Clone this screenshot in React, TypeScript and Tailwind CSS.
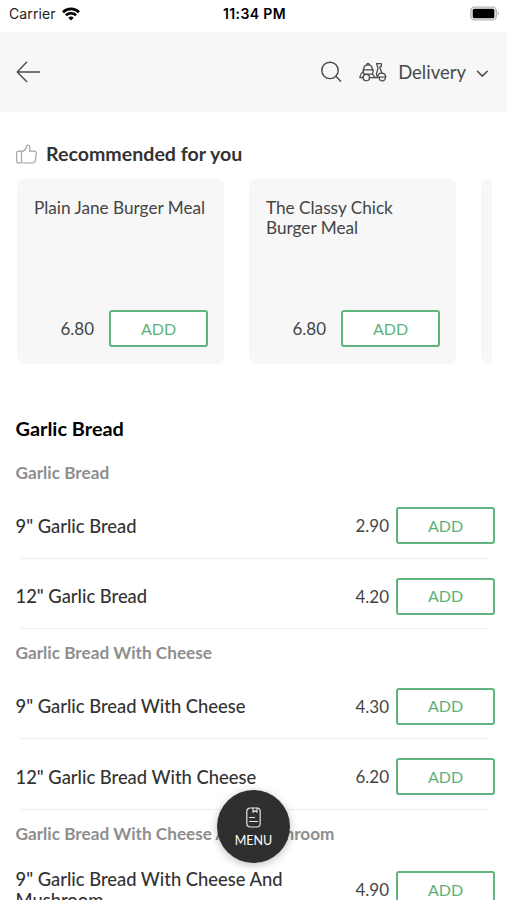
interface MenuItem {
  name: string;
  price: string;
}

interface MenuGroup {
  title: string;
  items: MenuItem[];
}

const recommended: MenuItem[] = [
  { name: 'Plain Jane Burger Meal', price: '6.80' },
  { name: 'The Classy Chick Burger Meal', price: '6.80' },
];

const groups: MenuGroup[] = [
  {
    title: 'Garlic Bread',
    items: [
      { name: '9" Garlic Bread', price: '2.90' },
      { name: '12" Garlic Bread', price: '4.20' },
    ],
  },
  {
    title: 'Garlic Bread With Cheese',
    items: [
      { name: '9" Garlic Bread With Cheese', price: '4.30' },
      { name: '12" Garlic Bread With Cheese', price: '6.20' },
    ],
  },
  {
    title: 'Garlic Bread With Cheese And Mushroom',
    items: [{ name: '9" Garlic Bread With Cheese And Mushroom', price: '4.90' }],
  },
];

function AddButton() {
  return (
    <button className="h-[37px] w-[99px] shrink-0 rounded-[3px] border-2 border-[#5fb47f] bg-white text-[16px] leading-none text-[#5ab27b]">
      ADD
    </button>
  );
}

function StatusBar() {
  return (
    <div className="grid h-8 grid-cols-3 items-center pr-[7px] pb-[5px] pl-[9px] font-['Inter'] text-[14px] text-[#222]">
      <div className="flex items-center gap-[6px]">
        <span className="tracking-[0.1px]">Carrier</span>
        <svg width="18" height="14" viewBox="0 0 18 14" fill="none" stroke="#000" strokeWidth="2.6">
          <path d="M1 5.2a11.4 11.4 0 0 1 16 0" />
          <path d="M3.9 8.3a7.3 7.3 0 0 1 10.2 0" />
          <path d="M9 13.6 6.3 10.8a3.9 3.9 0 0 1 5.4 0z" fill="#000" stroke="none" />
        </svg>
      </div>
      <span className="text-center font-semibold tracking-[0.4px] text-black">11:34 PM</span>
      <svg className="justify-self-end" width="30" height="15" viewBox="0 0 31 15" fill="none">
        <rect x="0.9" y="0.9" width="26.2" height="13.2" rx="3.8" stroke="#b5b5b5" strokeWidth="1.5" />
        <rect x="2.8" y="2.6" width="22.4" height="9.8" rx="1.6" fill="#000" />
        <path d="M28.6 5.2c1.8.7 1.8 3.9 0 4.6z" fill="#b5b5b5" />
      </svg>
    </div>
  );
}

function Header() {
  return (
    <header className="flex h-20 items-center bg-[#f7f7f7] pr-[18px] pl-4 text-[#4a4a4a]">
      <svg width="25" height="22" viewBox="0 0 25 22" fill="none" stroke="currentColor" strokeWidth="1.4" strokeLinecap="round" strokeLinejoin="round">
        <path d="M23.4 11H1.2M10.6 1.2 1.2 11l9.4 9.4" />
      </svg>

      <div className="ml-auto flex items-center">
        <svg width="22" height="22" viewBox="0 0 22 22" fill="none" stroke="currentColor" strokeWidth="1.4" strokeLinecap="round">
          <circle cx="9" cy="9.4" r="8.2" />
          <path d="m14.9 15.3 4.7 4.9" />
        </svg>

        {/* Scooter */}
        <svg className="ml-4" width="28" height="20" viewBox="0 0 28 20" fill="none" stroke="currentColor" strokeWidth="1.3" strokeLinecap="round" strokeLinejoin="round">
          <path d="M4.6 7.8C4.6 4.6 6.6 2.9 9 2.9s4.4 1.7 4.4 4.9" />
          <path d="M7.8 2.7c0-1.9 2.4-1.9 2.4 0M4 7.8h10" />
          <path d="M4.4 8c-.2 1.6 0 3 .6 4.2h8.4c.6-1.2.8-2.8.6-4.2" />
          <path d="M4 9.6c-1.7 1.6-2.9 3.6-3.2 5.9h3" />
          <circle cx="7.3" cy="15.6" r="3.2" />
          <path d="M10.7 15.6h8c0-2.9 1.5-4.4 3.8-4.4s3.9 1.3 4.3 3.6l-6.6.4" />
          <path d="M13.4 12.2l2.8 3.4M18.7 15.4l-1.4-3.2 1.7-5.8-1.4-4.8h4.6l.2 2.6-1.7.8 2.2 6.2" />
          <path d="M20.2 15.2a3.1 3.1 0 1 0 6-.2" />
        </svg>

        <span className="ml-[11px] pt-[2px] text-[18.5px]">Delivery</span>
        <svg className="mt-[3px] ml-[10px]" width="13" height="8" viewBox="0 0 13 8" fill="none" stroke="currentColor" strokeWidth="1.5" strokeLinecap="round" strokeLinejoin="round">
          <path d="m1.4 1.2 4.9 4.9 4.9-4.9" />
        </svg>
      </div>
    </header>
  );
}

function MealCard({ name, price }: MenuItem) {
  return (
    <div className="flex h-full w-[207px] shrink-0 flex-col justify-between rounded-[7px] bg-[#f7f7f7] pt-[19px] pr-4 pb-[17px] pl-[17px]">
      <h3 className="text-[17.2px] leading-[20px]">{name}</h3>
      <div className="flex items-center justify-end gap-[15px]">
        <span className="pt-px text-[17px]">{price}</span>
        <AddButton />
      </div>
    </div>
  );
}

function MenuRow({ name, price }: MenuItem) {
  return (
    <div className="relative flex min-h-[70.5px] items-start pt-[19px] pr-3 pl-[15.5px]">
      <div className="flex min-h-[37px] w-full items-center">
        <h4 className="w-[300px] pt-px text-[18.35px] leading-[21px] font-medium text-[#333]">{name}</h4>
        <span className="ml-auto pt-px text-[17px]">{price}</span>
        <div className="ml-[7px] flex">
          <AddButton />
        </div>
      </div>
      <div className="absolute right-[19px] bottom-0 left-5 h-px bg-[#eeeeee]" />
    </div>
  );
}

export default function App() {
  return (
    <div className="relative h-[900px] w-[507px] overflow-hidden bg-white font-['Lato',sans-serif] text-[#444]">
      <StatusBar />
      <Header />

      {/* Recommended */}
      <section className="h-[294px] pt-[30px]">
        <div className="flex h-6 items-center gap-[9px] pl-4">
          <svg width="21" height="20" viewBox="0 0 21 20" fill="none" stroke="#a3a3a3" strokeWidth="1.2" strokeLinejoin="round">
            <path d="M5.5 7.2H2.2C1.3 7.2.7 7.8.7 8.7v8.5c0 .9.6 1.6 1.5 1.6h3.3" />
            <path d="M5.5 7.6v9.6c0 1 .6 1.8 1.6 1.8h9.6c1.4 0 2.1-.7 2.5-2l1.1-7.2c.2-1.7-.5-2.7-2-2.7h-4.8c.5-1.7.5-3.5 0-4.9-.5-1.5-2.7-1.6-3.1.1-.3 2.1-1.7 4.4-4.9 5.3z" />
          </svg>
          <h2 className="text-[19.6px] font-bold text-[#333]">Recommended for you</h2>
        </div>
        <div className="mt-[13px] mr-[15px] ml-[17px] flex h-[185px] gap-[25px] overflow-hidden">
          {recommended.map((item) => (
            <MealCard key={item.name} {...item} />
          ))}
          <div className="w-[207px] shrink-0 rounded-[7px] bg-[#f7f7f7]" />
        </div>
      </section>

      {/* Menu */}
      <section>
        <h2 className="h-[42.5px] pt-[10px] pl-[15.5px] text-[19.9px] leading-6 font-bold text-black">Garlic Bread</h2>
        {groups.map((group) => (
          <div key={group.title}>
            <h3 className="h-[39.5px] pt-[13px] pl-[15.5px] text-[17.2px] leading-[22px] font-bold text-[#8e8e8e]">{group.title}</h3>
            {group.items.map((item) => (
              <MenuRow key={item.name} {...item} />
            ))}
          </div>
        ))}
      </section>

      {/* Floating menu button */}
      <button className="absolute top-[790px] left-[217px] flex size-[73px] flex-col items-center rounded-full bg-[#2f2f2f] pt-[17px] text-white shadow-[0_2px_8px_rgba(0,0,0,0.25)]">
        <svg width="15" height="21" viewBox="0 0 15 21" fill="none" stroke="#e5e5e5" strokeWidth="1.2" strokeLinecap="round" strokeLinejoin="round">
          <rect x="0.8" y="1" width="13.4" height="19" rx="3.5" />
          <path d="M7 1.2v4l2-1.5 2 1.5v-4M3.6 10.5h5M3.6 14.5h8" />
        </svg>
        <span className="mt-[5px] text-[12.5px] leading-4">MENU</span>
      </button>
    </div>
  );
}
